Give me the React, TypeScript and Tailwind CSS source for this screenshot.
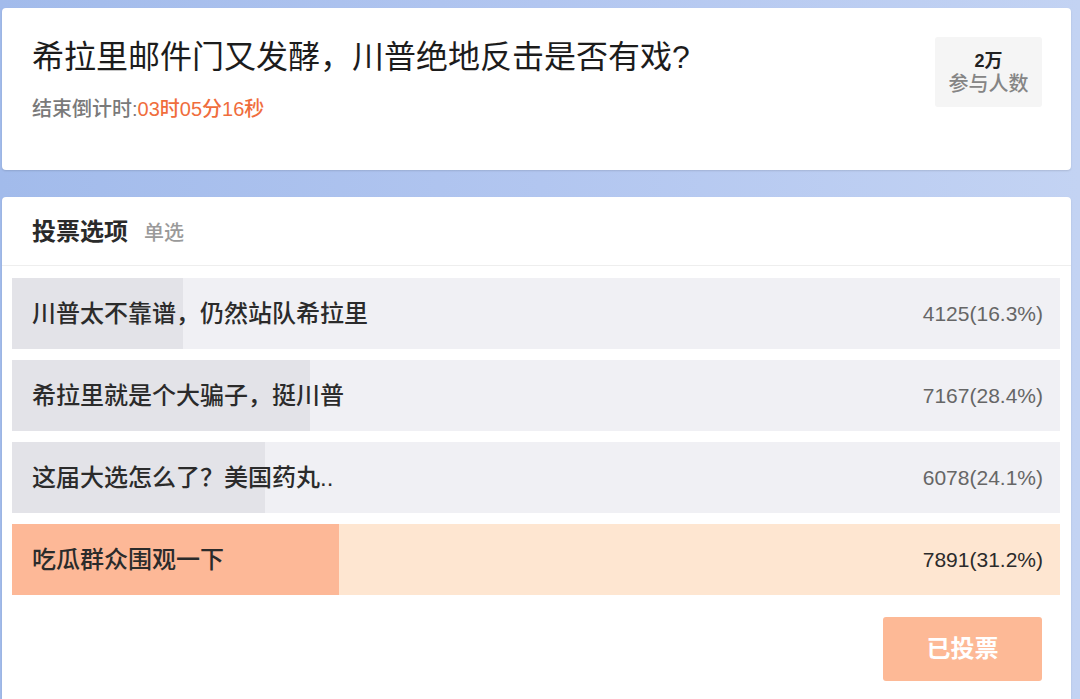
const options = [
  { label: '川普太不靠谱，仍然站队希拉里', votes: 4125, pct: 16.3, mine: false },
  { label: '希拉里就是个大骗子，挺川普', votes: 7167, pct: 28.4, mine: false },
  { label: '这届大选怎么了？美国药丸..', votes: 6078, pct: 24.1, mine: false },
  { label: '吃瓜群众围观一下', votes: 7891, pct: 31.2, mine: true },
]

const font = { fontFamily: '"Liberation Sans", "Noto Sans CJK SC", sans-serif' }

export default function App() {
  return (
    <div
      className="w-[1080px] h-[699px] overflow-hidden bg-gradient-to-r from-[#a2bbeb] via-[#b2c6f0] to-[#c3d3f3] pt-[8px] pl-[2px] pr-[9px]"
      style={font}
    >
      {/* topic card */}
      <div className="h-[162px] bg-white rounded-[4px] shadow-[0_1px_2px_rgba(0,0,0,0.12)] flex justify-between items-start pt-[29px] pl-[30px] pr-[29px]">
        <div>
          <h1 className="text-[32px] leading-[40px] text-[#1c1c1c] font-normal">
            希拉里邮件门又发酵，川普绝地反击是否有戏?
          </h1>
          <div className="mt-[20px] text-[20px] leading-[24px] font-medium text-[#7a7a7a]">
            结束倒计时:<span className="text-[#f06d3c]">03时05分16秒</span>
          </div>
        </div>
        <div className="w-[107px] h-[70px] bg-[#f5f5f5] rounded-[3px] flex flex-col items-center pt-[13px]">
          <div className="text-[18px] leading-[22px] font-bold text-[#222]">2万</div>
          <div className="text-[20px] leading-[24px] font-medium text-[#858585]">参与人数</div>
        </div>
      </div>

      {/* vote card */}
      <div className="mt-[27px] h-[520px] bg-white rounded-t-[4px] shadow-[0_1px_2px_rgba(0,0,0,0.12)]">
        <div className="h-[69px] flex items-baseline pl-[30px] pt-[20px] border-b border-[#eeeeee]">
          <span className="text-[24px] leading-[29px] font-bold text-[#2a2a2a]">投票选项</span>
          <span className="ml-[16px] text-[20px] leading-[24px] font-medium text-[#9a9a9a]">单选</span>
        </div>
        <div className="flex flex-col gap-[11px] pt-[12px] pl-[10px] pr-[11px]">
          {options.map((o) => (
            <div
              key={o.label}
              className={
                'relative h-[71px] flex items-center justify-between pl-[20px] pr-[17px] ' +
                (o.mine ? 'bg-[#fee6d1]' : 'bg-[#f0f0f4]')
              }
            >
              <div
                className={'absolute left-0 top-0 h-full ' + (o.mine ? 'bg-[#fdb897]' : 'bg-[#e3e3e8]')}
                style={{ width: `${o.pct}%` }}
              />
              <span className="relative text-[24px] leading-[30px] font-medium text-[#2b2b2b]">{o.label}</span>
              <span className={'relative text-[21px] leading-[24px] ' + (o.mine ? 'text-[#2b2b2b]' : 'text-[#666]')}>
                {o.votes}({o.pct}%)
              </span>
            </div>
          ))}
        </div>
        <div className="flex justify-end pr-[29px] mt-[22px]">
          <button className="w-[159px] h-[64px] rounded-[3px] bg-[#fdb996] text-white text-[24px] font-bold">
            已投票
          </button>
        </div>
      </div>
    </div>
  )
}
